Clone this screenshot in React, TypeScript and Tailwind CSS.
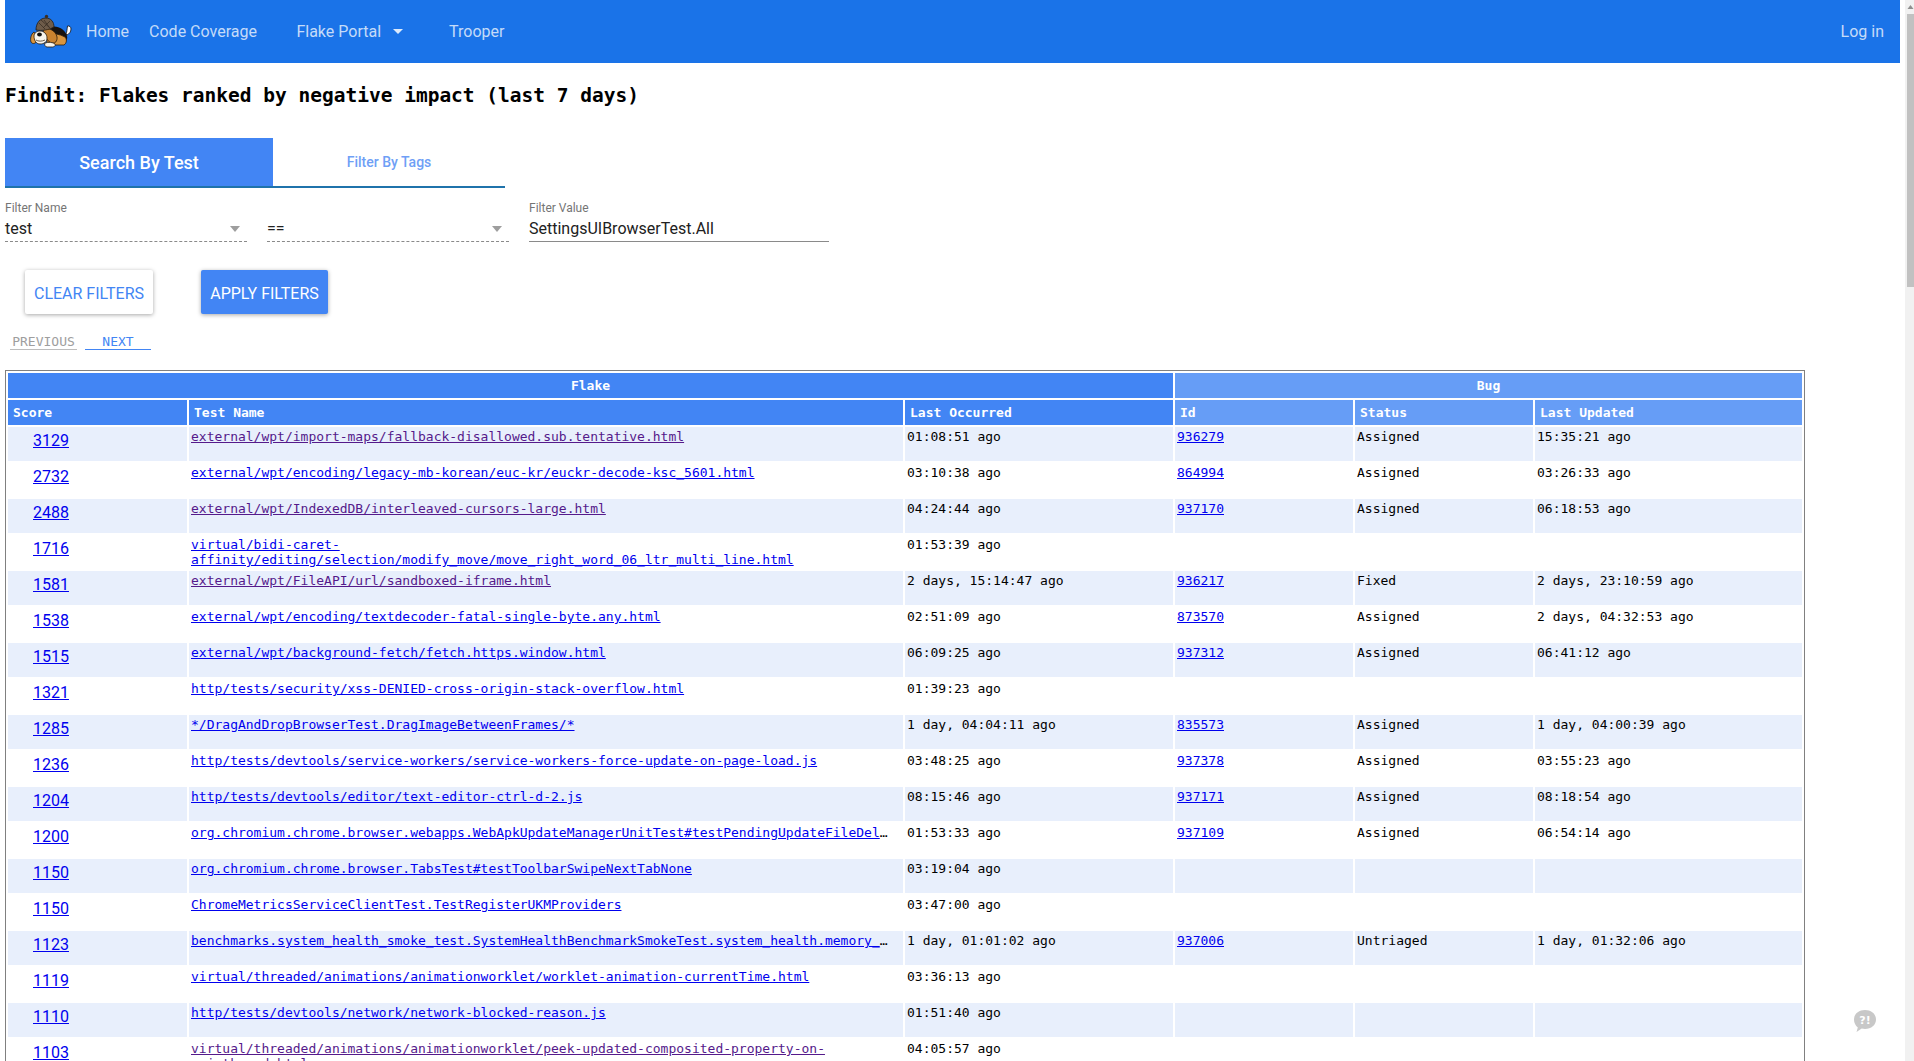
const roboto = "font-['Roboto',sans-serif]";

const rows = [
  { score: 3129, name: "external/wpt/import-maps/fallback-disallowed.sub.tentative.html", visited: true, last: "01:08:51 ago", id: "936279", status: "Assigned", updated: "15:35:21 ago" },
  { score: 2732, name: "external/wpt/encoding/legacy-mb-korean/euc-kr/euckr-decode-ksc_5601.html", last: "03:10:38 ago", id: "864994", status: "Assigned", updated: "03:26:33 ago" },
  { score: 2488, name: "external/wpt/IndexedDB/interleaved-cursors-large.html", visited: true, last: "04:24:44 ago", id: "937170", status: "Assigned", updated: "06:18:53 ago" },
  { score: 1716, name: "virtual/bidi-caret-affinity/editing/selection/modify_move/move_right_word_06_ltr_multi_line.html", last: "01:53:39 ago" },
  { score: 1581, name: "external/wpt/FileAPI/url/sandboxed-iframe.html", visited: true, last: "2 days, 15:14:47 ago", id: "936217", status: "Fixed", updated: "2 days, 23:10:59 ago" },
  { score: 1538, name: "external/wpt/encoding/textdecoder-fatal-single-byte.any.html", last: "02:51:09 ago", id: "873570", status: "Assigned", updated: "2 days, 04:32:53 ago" },
  { score: 1515, name: "external/wpt/background-fetch/fetch.https.window.html", last: "06:09:25 ago", id: "937312", status: "Assigned", updated: "06:41:12 ago" },
  { score: 1321, name: "http/tests/security/xss-DENIED-cross-origin-stack-overflow.html", last: "01:39:23 ago" },
  { score: 1285, name: "*/DragAndDropBrowserTest.DragImageBetweenFrames/*", last: "1 day, 04:04:11 ago", id: "835573", status: "Assigned", updated: "1 day, 04:00:39 ago" },
  { score: 1236, name: "http/tests/devtools/service-workers/service-workers-force-update-on-page-load.js", last: "03:48:25 ago", id: "937378", status: "Assigned", updated: "03:55:23 ago" },
  { score: 1204, name: "http/tests/devtools/editor/text-editor-ctrl-d-2.js", last: "08:15:46 ago", id: "937171", status: "Assigned", updated: "08:18:54 ago" },
  { score: 1200, name: "org.chromium.chrome.browser.webapps.WebApkUpdateManagerUnitTest#testPendingUpdateFileDeletedWhenManifestUnchanged", last: "01:53:33 ago", id: "937109", status: "Assigned", updated: "06:54:14 ago" },
  { score: 1150, name: "org.chromium.chrome.browser.TabsTest#testToolbarSwipeNextTabNone", last: "03:19:04 ago" },
  { score: 1150, name: "ChromeMetricsServiceClientTest.TestRegisterUKMProviders", last: "03:47:00 ago" },
  { score: 1123, name: "benchmarks.system_health_smoke_test.SystemHealthBenchmarkSmokeTest.system_health.memory_desktop:browse:media:youtube", last: "1 day, 01:01:02 ago", id: "937006", status: "Untriaged", updated: "1 day, 01:32:06 ago" },
  { score: 1119, name: "virtual/threaded/animations/animationworklet/worklet-animation-currentTime.html", last: "03:36:13 ago" },
  { score: 1110, name: "http/tests/devtools/network/network-blocked-reason.js", last: "01:51:40 ago" },
  { score: 1103, name: "virtual/threaded/animations/animationworklet/peek-updated-composited-property-on-mainthread.html", visited: true, last: "04:05:57 ago" },
];

function Logo() {
  return (
    <svg width="48" height="40" viewBox="0 0 48 40" className="absolute left-[23px] top-[12px]">
      {/* tail */}
      <path d="M38 22c1-2 1-5 1.500-8 2-.5 3.500 1 3.500 3 0 3-2 5-4 6z" fill="#fff" stroke="#15100c" strokeWidth="0.8" />
      {/* black saddle */}
      <path d="M23 15c6-2 14 2 16 9 .5 2 0 4-1 5H24z" fill="#17120f" />
      {/* tan body */}
      <path d="M19 21c5 0 13 1 18 4 2 2 2 6-1 8H19z" fill="#d8953f" stroke="#2a1a0a" strokeWidth="0.8" />
      {/* right ear */}
      <path d="M15 17c6-2 13 2 14 8 .5 4-2 7-5 6-4-1-8-6-9-14z" fill="#c9822f" stroke="#2a1a0a" strokeWidth="0.8" />
      {/* left ear */}
      <path d="M6 20c-3 2-4 7-3 10 1 2 4 2 5 0 1-3 0-8-2-10z" fill="#d8953f" stroke="#2a1a0a" strokeWidth="0.8" />
      {/* muzzle */}
      <path d="M6 24c0-3 3-5 6-5 4 0 7 3 7 7s-3 6-7 6-6-4-6-8z" fill="#f7f4ec" stroke="#2a1a0a" strokeWidth="0.8" />
      <ellipse cx="11.500" cy="22.500" rx="2.400" ry="1.900" fill="#111" />
      <path d="M8 28c2 1.500 6 1.500 9 0" fill="none" stroke="#2a1a0a" strokeWidth="0.7" />
      {/* paw */}
      <path d="M17 31c3-1 8-1 10 1 1 2-1 3-3 3h-5c-2 0-3-3-2-4z" fill="#f7f4ec" stroke="#2a1a0a" strokeWidth="0.8" />
      {/* deerstalker */}
      <path d="M8 18c0-7 4-12 10-12 5 0 8 4 8 9-5 3-12 4-18 3z" fill="#6e5c4a" stroke="#231a12" strokeWidth="0.8" />
      <path d="M11 11l6 6M16 8l5 7M22 9l-7 7M13 8l9 8" stroke="#3a2e24" strokeWidth="0.8" />
      <circle cx="18.500" cy="4.500" r="1.700" fill="#3a2e24" />
    </svg>
  );
}

function NavLink({ children, className }: { children: string; className: string }) {
  return <a className={`text-[16px] leading-5 text-white/75 ${className}`}>{children}</a>;
}

function SelectField({ label, value, width }: { label?: string; value: string; width: string }) {
  return (
    <div className={`${width} flex flex-col`}>
      <div className="h-[14px] text-[12px] leading-[14px] text-[#757575]">{label}</div>
      <div className="mt-[3px] h-[24px] pt-px flex items-start justify-between border-b border-dashed border-[#8a8a8a]">
        <span className="text-[16px] leading-5 text-[#212121]">{value}</span>
        <svg width="10" height="6" viewBox="0 0 10 6" className="mt-[7px] mr-[7px]">
          <path d="M0 0h10L5 6z" fill="#9e9e9e" />
        </svg>
      </div>
    </div>
  );
}

function Filters() {
  return (
    <div className={roboto}>
      <div className="flex w-[500px] border-b-2 border-[#1f73ab]">
        <div className="w-[268px] h-[48px] bg-[#4285f4] text-white text-[18px] font-medium flex items-center justify-center">
          Search By Test
        </div>
        <div className="flex-1 h-[48px] text-[#6f9ff6] text-[14px] font-medium flex items-center justify-center">
          Filter By Tags
        </div>
      </div>
      <div className="flex mt-[13px]">
        <SelectField label="Filter Name" value="test" width="w-[242px]" />
        <div className="ml-5">
          <SelectField value="==" width="w-[242px]" />
        </div>
        <div className="ml-5 w-[300px] flex flex-col">
          <div className="h-[14px] text-[12px] leading-[14px] text-[#757575]">Filter Value</div>
          <div className="mt-[3px] h-[24px] pt-px border-b border-[#8a8a8a] text-[16px] leading-5 text-[#212121]">SettingsUIBrowserTest.All</div>
        </div>
      </div>
      <div className="flex mt-[28px] ml-5 gap-12 text-[16px]">
        <button className="w-[128px] h-[44px] pt-[4px] rounded-[2px] bg-white text-[#4285f4] shadow-[0_1px_4px_rgba(0,0,0,0.35)]">CLEAR FILTERS</button>
        <button className="w-[127px] h-[44px] pt-[4px] rounded-[2px] bg-[#4285f4] text-white shadow-[0_1px_4px_rgba(0,0,0,0.35)]">APPLY FILTERS</button>
      </div>
    </div>
  );
}

function Table() {
  const th = "h-[25px] text-white text-left font-bold px-[5px] p-0";
  return (
    <table className="table-fixed w-[1800px] border-separate border-spacing-[2px] border border-[#808080] text-[13px] leading-[15px]">
      <colgroup>
        <col className="w-[179px]" />
        <col className="w-[714px]" />
        <col className="w-[268px]" />
        <col className="w-[178px]" />
        <col className="w-[178px]" />
        <col className="w-[267px]" />
      </colgroup>
      <thead>
        <tr>
          <th colSpan={3} className="h-[25px] bg-[#4285f4] text-white text-center font-bold p-0">Flake</th>
          <th colSpan={3} className="h-[25px] bg-[#669df6] text-white text-center font-bold p-0">Bug</th>
        </tr>
        <tr>
          <th className={`${th} bg-[#4285f4]`}>Score</th>
          <th className={`${th} bg-[#4285f4]`}>Test Name</th>
          <th className={`${th} bg-[#4285f4]`}>Last Occurred</th>
          <th className={`${th} bg-[#669df6]`}>Id</th>
          <th className={`${th} bg-[#669df6]`}>Status</th>
          <th className={`${th} bg-[#669df6]`}>Last Updated</th>
        </tr>
      </thead>
      <tbody>
        {rows.map((r, i) => {
          const bg = i % 2 === 0 ? "bg-[#e8effc]" : "bg-white";
          const td = `${bg} h-[34px] align-top px-[2px] pt-[2px] pb-0 text-black`;
          return (
            <tr key={i}>
              <td className={`${bg} h-[34px] align-top pl-[25px] pt-[5px] pb-0`}>
                <a className={`${roboto} text-[16px] leading-[18px] text-[#0000ee] underline`}>{r.score}</a>
              </td>
              <td className={td}>
                <div className="mr-[8px] overflow-hidden text-ellipsis">
                  <a className={`underline ${r.visited ? "text-[#551a8b]" : "text-[#0000ee]"}`}>{r.name}</a>
                </div>
              </td>
              <td className={td}>{r.last}</td>
              <td className={td}>{r.id && <a className="text-[#0000ee] underline">{r.id}</a>}</td>
              <td className={td}>{r.status}</td>
              <td className={td}>{r.updated}</td>
            </tr>
          );
        })}
      </tbody>
    </table>
  );
}

export default function App() {
  return (
    <div className="relative flex h-screen overflow-hidden bg-white font-['DejaVu_Sans_Mono',monospace]">
      <div className="flex-1 min-w-0 px-[5px]">
        <nav className={`relative h-[63px] bg-[#1a73e8] flex items-center ${roboto}`}>
          <Logo />
          <NavLink className="ml-[81px]">Home</NavLink>
          <NavLink className="ml-5">Code Coverage</NavLink>
          <NavLink className="ml-[39.500px]">Flake Portal</NavLink>
          <svg width="10" height="5" viewBox="0 0 10 5" className="ml-[12px]">
            <path d="M0 0h10L5 5z" fill="#fff" opacity="0.85" />
          </svg>
          <NavLink className="ml-[46px]">Trooper</NavLink>
          <NavLink className="ml-auto mr-4">Log in</NavLink>
        </nav>
        <h1 className="mt-[21px] mb-[31px] text-[19.5px] leading-[23px] font-bold text-black">
          Findit: Flakes ranked by negative impact (last 7 days)
        </h1>
        <Filters />
        <div className="flex mt-[17px] ml-[5px] gap-2 text-[13px] leading-[15px]">
          <button className="w-[67px] h-[19px] pt-[3px] border-b border-[#bdbdbd] text-[#9e9e9e]">PREVIOUS</button>
          <button className="w-[66px] h-[19px] pt-[3px] border-b border-[#4285f4] text-[#4285f4]">NEXT</button>
        </div>
        <div className="mt-[20px]">
          <Table />
        </div>
      </div>
      <div className="w-[9px] shrink-0 bg-[#f1f1f1] flex flex-col items-end">
        <svg width="7" height="14" viewBox="0 0 7 14">
          <path d="M0.5 9L3.5 5l3 4z" fill="#8f8f8f" />
        </svg>
        <div className="w-[7px] h-[273px] bg-[#c1c1c1]" />
      </div>
      <svg width="24" height="24" viewBox="0 0 24 24" className="absolute left-[1853px] top-[1009px]">
        <path d="M12 1c6.200 0 11 3.900 11 9.500S18.200 20 12 20c-1.200 0-2.300-.1-3.300-.4L3.500 23l1.300-4.600C2.500 16.700 1 13.900 1 10.500 1 4.900 5.800 1 12 1z" fill="#c8c8c8" />
        <text x="12" y="14.500" textAnchor="middle" fontSize="11" fontWeight="700" fontFamily="'DejaVu Sans',sans-serif" fill="#fff">?!</text>
      </svg>
    </div>
  );
}
